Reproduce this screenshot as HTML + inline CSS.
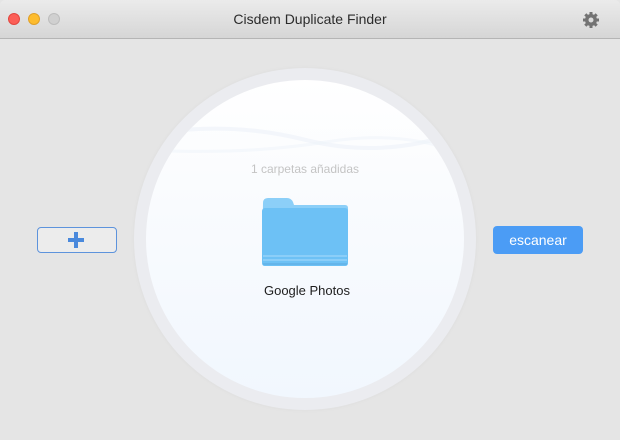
<!DOCTYPE html>
<html><head><meta charset="utf-8"><style>
*{margin:0;padding:0;box-sizing:border-box}
body{width:620px;height:440px;overflow:hidden;background:#e5e5e5;font-family:"Liberation Sans",Helvetica,Arial,sans-serif;position:relative}
.tb{position:absolute;left:0;top:0;width:620px;height:39px;background:linear-gradient(#ebebeb,#d6d6d6);border-bottom:1px solid #b5b5b5;border-radius:5px 5px 0 0}
.dot{position:absolute;top:13px;width:12px;height:12px;border-radius:50%}
.title{position:absolute;left:0;right:0;top:11px;text-align:center;font-size:14px;color:#2b2b2b}
.ring{position:absolute;left:134px;top:68px;width:342px;height:342px;border-radius:50%;background:#ebecf0;box-shadow:0 0 4px rgba(0,0,0,0.04)}
.inner{position:absolute;left:146px;top:80px;width:318px;height:318px;border-radius:50%;background:linear-gradient(#ffffff 0%,#f9fbfe 40%,#f1f7fe 100%);overflow:hidden}
.lbl{position:absolute;left:0;right:0;text-align:center}
.plus{position:absolute;left:37px;top:227px;width:80px;height:26px;border:1px solid #5d93dc;border-radius:4px;background:#ececec}
.scan{position:absolute;left:493px;top:226px;width:90px;height:28px;background:#4b9cf5;border-radius:4px;color:#fff;font-size:14px;text-align:center;line-height:28px}
</style></head><body>
<div class="tb">
<div class="dot" style="left:8px;background:#fc5f57;border:1px solid #e2463f"></div>
<div class="dot" style="left:28px;background:#fdbc2e;border:1px solid #e0a028"></div>
<div class="dot" style="left:48px;background:#d0d0d0;border:1px solid #bdbdbd"></div>
<div class="title">Cisdem Duplicate Finder</div>
<svg style="position:absolute;left:582px;top:11px" width="18" height="18" viewBox="0 0 18 18">
<g fill="#737373"><circle cx="9" cy="9" r="6"/>
<g stroke="#737373" stroke-width="3">
<line x1="9" y1="1" x2="9" y2="17"/><line x1="1" y1="9" x2="17" y2="9"/>
<line x1="3.3" y1="3.3" x2="14.7" y2="14.7"/><line x1="14.7" y1="3.3" x2="3.3" y2="14.7"/></g></g>
<circle cx="9" cy="9" r="2.5" fill="#dcdcdc"/></svg>
</div>
<div class="ring"></div>
<div class="inner">
<svg style="position:absolute;left:0;top:0" width="318" height="120"><path d="M0 55 Q80 40 160 60 T318 50" stroke="#edf2f9" stroke-width="4" fill="none" opacity="0.6"/><path d="M0 70 Q100 75 180 62 T318 75" stroke="#eef3f9" stroke-width="3" fill="none" opacity="0.5"/></svg>
</div>
<div class="lbl" style="top:162px;left:-10px;font-size:12px;color:#c4c4c4">1 carpetas añadidas</div>
<svg style="position:absolute;left:261px;top:197px" width="88" height="70" viewBox="0 0 88 70">
<path d="M2 6 Q2 1 7 1 L26 1 Q30 1 32 5 L33 8 L84 8 Q87 8 87 11 L87 66 Q87 69 84 69 L4 69 Q1 69 1 66Z" fill="#8ccff8"/>
<rect x="1" y="11" width="86" height="58" rx="3" fill="#6dc1f5"/>
<line x1="2" y1="59" x2="86" y2="59" stroke="#a9dcfa" stroke-width="1"/>
<line x1="2" y1="63" x2="86" y2="63" stroke="#a9dcfa" stroke-width="1"/>
<line x1="2" y1="67" x2="86" y2="67" stroke="#5aa9de" stroke-width="1"/>
</svg>
<div class="lbl" style="top:283px;left:-6px;font-size:13px;color:#1e1e1e">Google Photos</div>
<div class="plus"><svg style="position:absolute;left:30px;top:4px" width="16" height="16"><rect x="6" y="0" width="4" height="16" fill="#4a89dc"/><rect x="0" y="6" width="16" height="4" fill="#4a89dc"/></svg></div>
<div class="scan">escanear</div>
</body></html>
